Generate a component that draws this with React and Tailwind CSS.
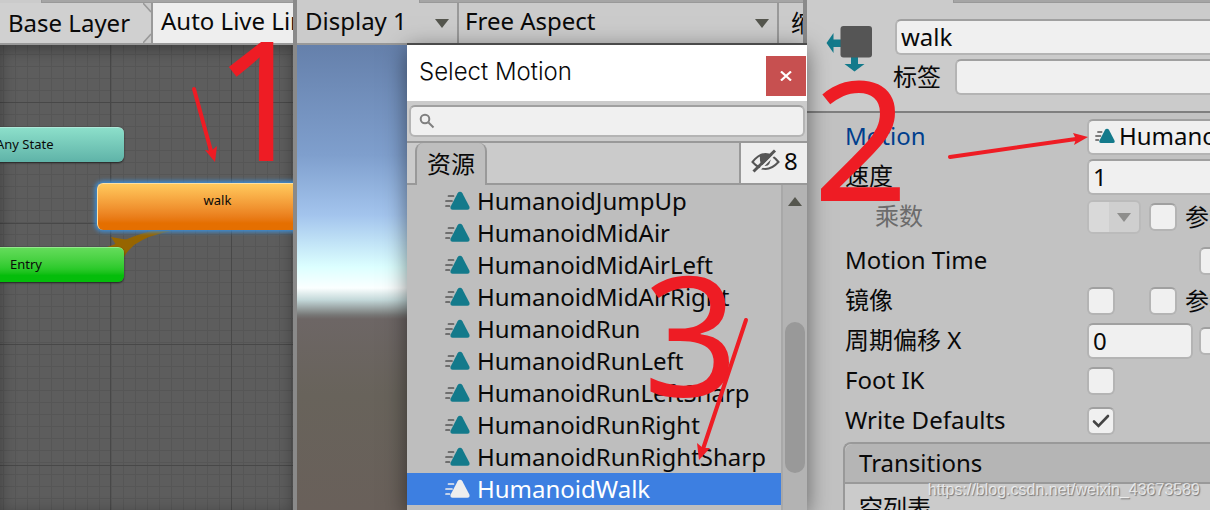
import React from "react";

const MOTIONS = [
  "HumanoidJumpUp",
  "HumanoidMidAir",
  "HumanoidMidAirLeft",
  "HumanoidMidAirRight",
  "HumanoidRun",
  "HumanoidRunLeft",
  "HumanoidRunLeftSharp",
  "HumanoidRunRight",
  "HumanoidRunRightSharp",
  "HumanoidWalk",
];

const FIELD =
  "border-2 border-[#b4b4b4] border-t-[#a0a0a0] bg-[#f0f0f0] rounded-md";

function MotionIcon({ selected = false, className }) {
  const line = selected ? "#eeeeee" : "#555555";
  const fill = selected ? "#eeeeee" : "#137a8b";
  return (
    <svg viewBox="0 0 25 20" className={className} aria-hidden="true">
      <g stroke={line} strokeWidth="1.7" strokeLinecap="round">
        <path d="M3.500 5H8.500M1 10H7M1 15H4.500" />
      </g>
      <path
        d="M15 .8Q16.600 .8 17.400 2.200L24.200 15.200Q25.500 18.800 22.500 18.800H7.500Q4.500 18.800 5.800 15.200L12.600 2.200Q13.400 .8 15 .8Z"
        fill={fill}
      />
    </svg>
  );
}

function Caret({ className = "text-[#55564e]", up = false }) {
  return (
    <svg viewBox="0 0 14 9" className={"h-[9px] w-3.5 shrink-0 " + className} aria-hidden="true">
      <path d={up ? "M7 0L14 9H0Z" : "M0 0H14L7 9Z"} fill="currentColor" />
    </svg>
  );
}

function TabStrip({ tab }) {
  return (
    <div className="flex h-[3px] shrink-0 bg-[#cbcbcb]">
      <div className={tab} />
      <div className="flex-1 border-b border-l border-[#999] bg-[#a5a5a5]" />
    </div>
  );
}

function Check({ label, checked = false, id }) {
  return (
    <span className="grid shrink-0 place-items-center">
      <input
        id={id}
        type="checkbox"
        defaultChecked={checked}
        aria-label={label}
        className={"peer col-start-1 row-start-1 size-7 appearance-none " + FIELD}
      />
      <svg
        viewBox="0 0 18 14"
        className="pointer-events-none invisible col-start-1 row-start-1 h-3.5 w-[18px] peer-checked:visible"
        aria-hidden="true"
      >
        <path d="M2 7.500L6.500 12L16 2" fill="none" stroke="#444" strokeWidth="2.600" strokeLinecap="round" />
      </svg>
    </span>
  );
}

function Row({ label, htmlFor, className = "", labelClass = "", children }) {
  return (
    <div className={"flex h-10 items-center " + className}>
      <label htmlFor={htmlFor} className={"w-[242px] shrink-0 pb-0.5 whitespace-nowrap " + labelClass}>
        {label}
      </label>
      {children}
    </div>
  );
}

function AnimatorPanel() {
  return (
    <section className="flex w-[293px] shrink-0 flex-col overflow-hidden">
      <TabStrip tab="w-[41px]" />
      <nav className="flex h-[42px] shrink-0 border-b-2 border-[#999] bg-[#d0d0d0]">
        <button className="w-[143px] shrink-0 pl-2 text-left">Base Layer</button>
        <svg viewBox="0 0 8 40" className="h-10 w-2 shrink-0" aria-hidden="true">
          <path d="M0 0H8V9ZM0 40H8V31Z" fill="#cacaca" />
          <path d="M0 0L8 9M0 40L8 31" stroke="#999" strokeWidth="1.500" />
        </svg>
        <button className="shrink-0 border-l-2 border-[#999] bg-[#eee] pb-1 pl-2 whitespace-nowrap">
          Auto Live Link
        </button>
      </nav>
      <div className="relative flex-1 overflow-hidden bg-[#5d5d5d] text-[13px]">
        <svg className="absolute inset-0 size-full" aria-hidden="true">
          <defs>
            <pattern id="minor" x="3" y="9" width="12" height="12" patternUnits="userSpaceOnUse">
              <path d="M0 .5H12M.5 0V12" stroke="#565656" />
            </pattern>
            <pattern id="major" x="110" y="57" width="121" height="121" patternUnits="userSpaceOnUse">
              <path d="M0 .5H121M.5 0V121" stroke="#484848" />
            </pattern>
          </defs>
          <rect width="100%" height="100%" fill="url(#minor)" />
          <rect width="100%" height="100%" fill="url(#major)" />
          <path d="M104 203L113 200Q140 188 152 186H172Q148 190 134 200L122 212Z" fill="#976500" />
          <path d="M111 192L134 196L124 212Z" fill="#976500" />
        </svg>
        <div className="absolute inset-0 shadow-[inset_0_4px_16px_rgba(0,0,0,0.35)]" />
        <div className="absolute top-[82px] -left-6 flex h-[35px] w-[148px] items-center rounded-md border-t border-[#aee9da] bg-linear-to-b from-[#8cdfca] to-[#5fb3a8] pl-5 shadow-[0_1px_2px_#222]">
          Any State
        </div>
        <div className="absolute top-[202px] -left-6 flex h-[35px] w-[148px] items-center rounded-md border-t border-[#93ea8c] bg-linear-to-b from-[#63dc5a] via-[#2cca2b] via-60% to-[#05bd0b] to-80% pl-[34px] shadow-[0_1px_2px_#222]">
          Entry
        </div>
        <div className="absolute top-[138px] left-[97px] h-[47px] w-60 rounded-md border-t border-l border-[#ffe0a0] bg-linear-to-b from-[#ffc95c] to-[#e56f00] to-85% pt-2 text-center shadow-[0_0_4px_2px_#3d8fd8]">
          walk
        </div>
      </div>
    </section>
  );
}

function MotionPicker() {
  return (
    <div
      role="dialog"
      aria-label="Select Motion"
      className="absolute top-[43px] -right-1 bottom-0 z-10 flex w-[400px] flex-col border-t-2 border-[#4a4a4a] bg-[#cbcbcb] shadow-[0_6px_22px_rgba(0,0,0,0.5)]"
    >
      <header className="flex h-14 shrink-0 items-center justify-between bg-white pr-px pl-3">
        <h2 className="pb-0.5 font-[Inter] text-2xl font-light">Select Motion</h2>
        <button aria-label="Close" className="mt-1.5 grid size-10 place-items-center bg-[#c75050]">
          <svg viewBox="0 0 12 10" className="h-2.5 w-3" aria-hidden="true">
            <path d="M1 .5L11 9.500M11 .5L1 9.500" stroke="#fff" strokeWidth="2.200" />
          </svg>
        </button>
      </header>
      <div className="flex h-10 shrink-0 px-0.5 py-1">
        <label className={"flex w-full items-center gap-2 rounded-lg px-2 " + FIELD}>
          <svg viewBox="0 0 16 16" className="size-4" aria-hidden="true">
            <circle cx="6" cy="6" r="4.300" fill="none" stroke="#7f7f7f" strokeWidth="2" />
            <path d="M9.500 9.500L14.500 14.500" stroke="#7f7f7f" strokeWidth="2" />
          </svg>
          <input aria-label="Search motions" className="h-6 min-w-0 flex-1 bg-transparent outline-none" />
        </label>
      </div>
      <div className="flex h-11 shrink-0 border-t-2 border-[#999]">
        <div className="w-2 border-b-2 border-[#999]" />
        <button className="w-[72px] rounded-t-lg border-x-2 border-[#999] bg-[#bebebe]">资源</button>
        <div className="flex-1 border-b-2 border-[#999]" />
        <button className="flex w-[68px] items-center gap-1 border-b-2 border-l-2 border-[#999] bg-[#eee] pb-1 pl-2.5">
          <svg viewBox="0 0 29 24" className="h-6 w-[29px]" aria-hidden="true">
            <path d="M1.500 13Q8 5 14.500 5T27.500 13Q21 20 14.500 20T1.500 13Z" fill="none" stroke="#555" strokeWidth="2" />
            <path d="M9 6Q8 17 14 17Q20 17 20 7Q15 4 9 6Z" fill="#555" />
            <path d="M5 24L26 3" stroke="#eee" strokeWidth="2" />
            <path d="M2.500 22.500L24 1.500" stroke="#555" strokeWidth="3" />
          </svg>
          8
        </button>
      </div>
      <div className="flex min-h-0 flex-1 bg-[#bebebe]">
        <ul className="min-w-0 flex-1 overflow-hidden">
          {MOTIONS.map((name) => {
            const selected = name === "HumanoidWalk";
            return (
              <li
                key={name}
                className={
                  "flex h-8 items-center gap-[7px] pl-[38px] " + (selected ? "bg-[#3d7fe1] text-white" : "")
                }
              >
                <MotionIcon selected={selected} className="h-5 w-[25px] shrink-0" />
                {name}
              </li>
            );
          })}
        </ul>
        <div className="flex w-[26px] flex-col items-center border-l-2 border-[#a8a8a8] bg-[#b3b3b3] pt-3">
          <Caret up />
          <div className="mt-[116px] h-[151px] w-5 rounded-full bg-[#999]" />
        </div>
      </div>
    </div>
  );
}

function GamePanel() {
  return (
    <section className="relative flex w-[514px] shrink-0 flex-col border-x-4 border-[#8a8a8a]">
      <TabStrip tab="w-[122px]" />
      <div className="flex h-[42px] shrink-0 overflow-hidden border-b-2 border-[#999] bg-[#cbcbcb]">
        <span className="flex w-[160px] shrink-0 items-center pr-2 pl-2">
          <select aria-label="Display" className="min-w-0 flex-1 appearance-none pb-1 outline-none">
            <option>Display 1</option>
          </select>
          <Caret />
        </span>
        <span className="flex w-[320px] shrink-0 items-center border-l-2 border-[#999] pr-2 pl-1.5">
          <select aria-label="Aspect" className="min-w-0 flex-1 appearance-none pb-1 outline-none">
            <option>Free Aspect</option>
          </select>
          <Caret />
        </span>
        <span className="flex-1 overflow-hidden border-l-2 border-[#999] pt-1 pl-3 whitespace-nowrap">缩放</span>
      </div>
      <div className="flex-1 bg-[linear-gradient(180deg,#6580ab_0px,#7f9fcd_110px,#a3c4ed_170px,#dcffff_222px,#fbffff_243px,#c3d8d9_255px,#777776_270px,#6d6665_274px,#68635b_350px,#69605a_465px)]" />
      <MotionPicker />
    </section>
  );
}

function InspectorPanel() {
  return (
    <section className="flex min-w-0 flex-1 flex-col overflow-hidden bg-[#c2c2c2]">
      <TabStrip tab="w-[146px]" />
      <header className="flex h-[110px] shrink-0 border-b-2 border-[#7f7f7f] bg-[#cbcbcb] pt-4 pl-[18px]">
        <svg viewBox="0 0 50 50" className="mt-1.5 size-[50px] shrink-0" aria-hidden="true">
          <path d="M1.500 18L8.500 8V14.500H16V22H8.500V28Z" fill="#137a8b" />
          <path d="M26 32H33V39H39.500L29.500 46.500L19.500 39H26Z" fill="#137a8b" />
          <rect x="15.500" y="1" width="31.500" height="31.500" rx="3" fill="#555" />
        </svg>
        <div className="ml-[18px] flex min-w-0 flex-1 flex-col gap-1">
          <input
            aria-label="Name"
            defaultValue="walk"
            className={"ml-0.5 h-9 min-w-0 rounded-r-none border-r-0 px-1 pb-0.5 " + FIELD}
          />
          <div className="flex items-center">
            <label htmlFor="tag" className="w-[62px] shrink-0">
              标签
            </label>
            <input id="tag" className={"h-9 min-w-0 flex-1 rounded-r-none border-r-0 px-1 " + FIELD} />
          </div>
        </div>
      </header>
      <form className="shrink-0 pt-1 pl-[38px]">
        <Row label="Motion" htmlFor="motion" labelClass="text-[#003e8d]">
          <button
            id="motion"
            type="button"
            className={"flex h-9 min-w-0 flex-1 items-center overflow-hidden rounded-r-none border-r-0 pb-0.5 pl-1.5 " + FIELD}
          >
            <MotionIcon className="mr-1 h-4 w-5 shrink-0" />
            HumanoidWalk
          </button>
        </Row>
        <Row label="速度" htmlFor="speed">
          <input
            id="speed"
            defaultValue="1"
            className={"h-9 min-w-0 flex-1 rounded-r-none border-r-0 px-1 pb-0.5 " + FIELD}
          />
        </Row>
        <Row label="乘数" htmlFor="multiplier" labelClass="pl-[30px] text-[#6b6b6b]">
          <span className="mr-2 flex h-[34px] w-[54px] shrink-0 items-center rounded-md border-2 border-[#bbb] bg-[#cfcfcf] pr-2">
            <select id="multiplier" disabled className="h-full w-5 appearance-none rounded-l bg-[#d9d9d9]" />
            <span className="flex-1" />
            <Caret className="text-[#8e8e8c]" />
          </span>
          <Check label="参数" />
          <span className="ml-2 w-7 flex-1 overflow-hidden whitespace-nowrap">参数</span>
        </Row>
        <Row label="Motion Time" htmlFor="time" className="mt-1">
          <span className="w-[112px] shrink-0" />
          <Check id="time" label="Motion Time" />
        </Row>
        <Row label="镜像" htmlFor="mirror">
          <Check id="mirror" label="镜像" />
          <span className="w-[34px] shrink-0" />
          <Check label="镜像参数" />
          <span className="ml-2 w-7 flex-1 overflow-hidden whitespace-nowrap">参数</span>
        </Row>
        <Row label="周期偏移 X" htmlFor="offset">
          <input id="offset" defaultValue="0" className={"mr-1.5 h-9 w-[106px] shrink-0 px-1 pb-0.5 " + FIELD} />
          <Check label="周期偏移参数" />
        </Row>
        <Row label="Foot IK" htmlFor="foot">
          <Check id="foot" label="Foot IK" />
        </Row>
        <Row label="Write Defaults" htmlFor="defaults">
          <Check id="defaults" label="Write Defaults" checked />
        </Row>
      </form>
      <div className="mt-px ml-9 rounded-tl-lg border-t-2 border-l-2 border-[#999] bg-[#cbcbcb]">
        <h3 className="h-10 rounded-tl-lg border-b-2 border-[#999] bg-[#b5b5b5] pl-3.5 leading-[38px]">Transitions</h3>
        <p className="pt-2 pl-3.5">空列表</p>
      </div>
    </section>
  );
}

function Annotations() {
  return (
    <div className="pointer-events-none absolute inset-0 z-20 overflow-hidden text-[167px] leading-none text-[#ee1c24]">
      <span className="absolute top-[13px] left-[214px]">1</span>
      <span className="absolute top-[53px] left-[813px]">2</span>
      <span className="absolute top-[248px] left-[643px]">3</span>
      <svg className="absolute inset-0 size-full" aria-hidden="true">
        <g stroke="#ee1c24" strokeWidth="4" strokeLinecap="round" fill="#ee1c24">
          <path d="M194 89L211 151" />
          <path d="M950 157L1076 139" />
          <path d="M746 320L703 449" />
        </g>
        <g fill="#ee1c24">
          <path d="M215 162L205 150L211 151L217 146Z" />
          <path d="M1088 137L1073 133L1076 139L1074 145Z" />
          <path d="M699 460L697 443L703 448L710 448Z" />
        </g>
      </svg>
      <span className="absolute right-2.5 bottom-2.5 font-['Liberation_Sans'] text-base leading-5 text-white/70 [text-shadow:1px_1px_1px_#777]">
        https://blog.csdn.net/weixin_43673589
      </span>
    </div>
  );
}

export default function App() {
  return (
    <main className="relative flex h-screen overflow-hidden bg-[#c2c2c2] font-['Noto_Sans','Noto_Sans_CJK_SC',sans-serif] text-2xl text-[#090909]">
      <AnimatorPanel />
      <GamePanel />
      <InspectorPanel />
      <Annotations />
    </main>
  );
}
